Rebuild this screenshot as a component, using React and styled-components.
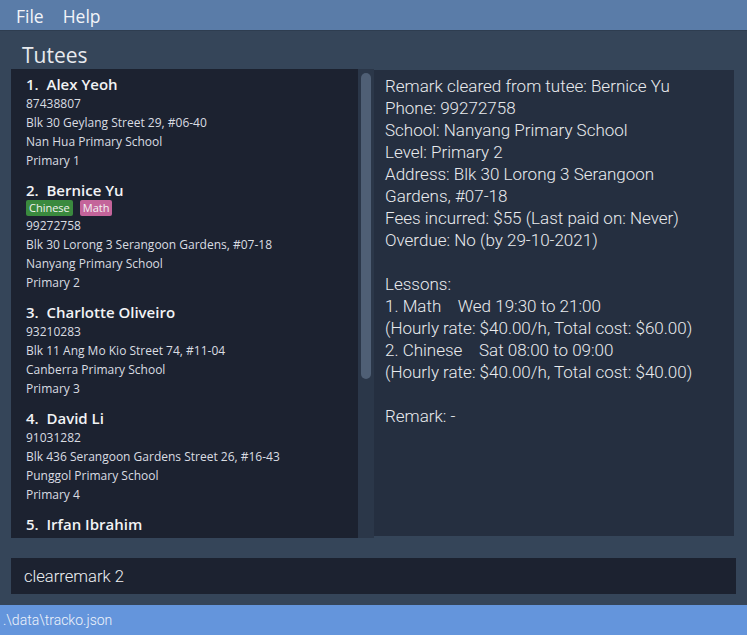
import React from 'react'
import styled, {createGlobalStyle} from 'styled-components'

const GlobalStyle = createGlobalStyle`
    html, body {
        margin: 0;
        padding: 0;
        background: #354559;
    }
    #root {
        height: 635px;
    }
`

const Window = styled.div`
    height: 635px;
    display: flex;
    flex-direction: column;
    background: #354559;
    font-family: "Open Sans", "Liberation Sans", sans-serif;
    overflow: hidden;
`

const MenuBar = styled.div`
    height: 30px;
    display: flex;
    align-items: center;
    gap: 19px;
    padding-left: 16px;
    background: #5a7ca8;
    border-bottom: 1px solid #2e3d50;
`

const MenuItem = styled.span`
    color: #f2f4f8;
    font-size: 17.5px;
    font-weight: 500;
    padding-top: 1px;
`

const Body = styled.div`
    flex: 1;
    display: flex;
    flex-direction: column;
    padding: 0 11px;
`

const Title = styled.div`
    height: 38px;
    box-sizing: border-box;
    padding: 12px 0 0 11px;
    line-height: 24px;
    color: #e8eaee;
    font-size: 21px;
`

const Content = styled.div`
    height: 469px;
    display: flex;
`

const ListPane = styled.div`
    width: 347px;
    background: #1c2230;
    overflow: hidden;
    padding: 5px 15px 0;
    box-sizing: border-box;
`

const ScrollTrack = styled.div`
    width: 16px;
    background: #2b3749;
    padding: 4px 3px 0;
    box-sizing: border-box;
`

const ScrollThumb = styled.div`
    height: 306px;
    border-radius: 5px;
    background: #4f5f75;
`

const Card = styled.div`
    margin-bottom: 10px;
`

const Name = styled.div`
    color: #f2f3f5;
    font-size: 15px;
    font-weight: 600;
    line-height: 20px;
    white-space: pre;
`

const Tags = styled.div`
    display: flex;
    gap: 7px;
    height: 16px;
`

const Tag = styled.span`
    background: ${p => p.$color};
    color: #f2f2f2;
    font-size: 11px;
    line-height: 16px;
    padding: 0 3px;
    border-radius: 2px;
`

const Line = styled.div`
    color: #dadde2;
    font-size: 12px;
    line-height: 19px;
`

const DetailPane = styled.div`
    flex: 1;
    margin: 1px 2px 2px 0;
    background: #252f40;
    padding: 5px 20px 5px 11px;
    color: #e9ebee;
    font-family: Roboto, "Liberation Sans", sans-serif;
    font-size: 17px;
    font-weight: 300;
    line-height: 22px;
    white-space: pre-wrap;
`

const CommandBox = styled.div`
    margin-top: 20px;
    height: 36px;
    display: flex;
    align-items: center;
    padding-left: 13px;
    background: #1c2230;
    color: #eef0f3;
    font-family: Roboto, "Liberation Sans", sans-serif;
    font-size: 16.6px;
    font-weight: 300;
`

const StatusBar = styled.div`
    margin-top: 11px;
    height: 30px;
    display: flex;
    align-items: center;
    padding-left: 3px;
    background: #6495dc;
    color: #eef3fb;
    font-family: Roboto, "Liberation Sans", sans-serif;
    font-size: 14px;
    font-weight: 300;
`

// last card is cut off by the pane, only its name shows
const tutees = [
    {name: 'Alex Yeoh', lines: ['87438807', 'Blk 30 Geylang Street 29, #06-40', 'Nan Hua Primary School', 'Primary 1']},
    {name: 'Bernice Yu', tags: [['Chinese', '#3a8a3e'], ['Math', '#c4649a']], lines: ['99272758', 'Blk 30 Lorong 3 Serangoon Gardens, #07-18', 'Nanyang Primary School', 'Primary 2']},
    {name: 'Charlotte Oliveiro', lines: ['93210283', 'Blk 11 Ang Mo Kio Street 74, #11-04', 'Canberra Primary School', 'Primary 3']},
    {name: 'David Li', lines: ['91031282', 'Blk 436 Serangoon Gardens Street 26, #16-43', 'Punggol Primary School', 'Primary 4']},
    {name: 'Irfan Ibrahim', lines: []},
]

const detail = `Remark cleared from tutee: Bernice Yu
Phone: 99272758
School: Nanyang Primary School
Level: Primary 2
Address: Blk 30 Lorong 3 Serangoon Gardens, #07-18
Fees incurred: $55 (Last paid on: Never)
Overdue: No (by 29-10-2021)

Lessons:
1. Math    Wed 19:30 to 21:00
(Hourly rate: $40.00/h, Total cost: $60.00)
2. Chinese    Sat 08:00 to 09:00
(Hourly rate: $40.00/h, Total cost: $40.00)

Remark: -`

export default function App() {
    return (
        <Window>
            <GlobalStyle />
            <MenuBar>
                <MenuItem>File</MenuItem>
                <MenuItem>Help</MenuItem>
            </MenuBar>
            <Body>
                <Title>Tutees</Title>
                <Content>
                    <ListPane>
                        {tutees.map((t, i) => (
                            <Card key={t.name}>
                                <Name>{`${i + 1}.  ${t.name}`}</Name>
                                {t.tags && (
                                    <Tags>
                                        {t.tags.map(([label, color]) => (
                                            <Tag key={label} $color={color}>{label}</Tag>
                                        ))}
                                    </Tags>
                                )}
                                {t.lines.map(l => <Line key={l}>{l}</Line>)}
                            </Card>
                        ))}
                    </ListPane>
                    <ScrollTrack>
                        <ScrollThumb />
                    </ScrollTrack>
                    <DetailPane>{detail}</DetailPane>
                </Content>
                <CommandBox>clearremark 2</CommandBox>
            </Body>
            <StatusBar>.\data\tracko.json</StatusBar>
        </Window>
    )
}
